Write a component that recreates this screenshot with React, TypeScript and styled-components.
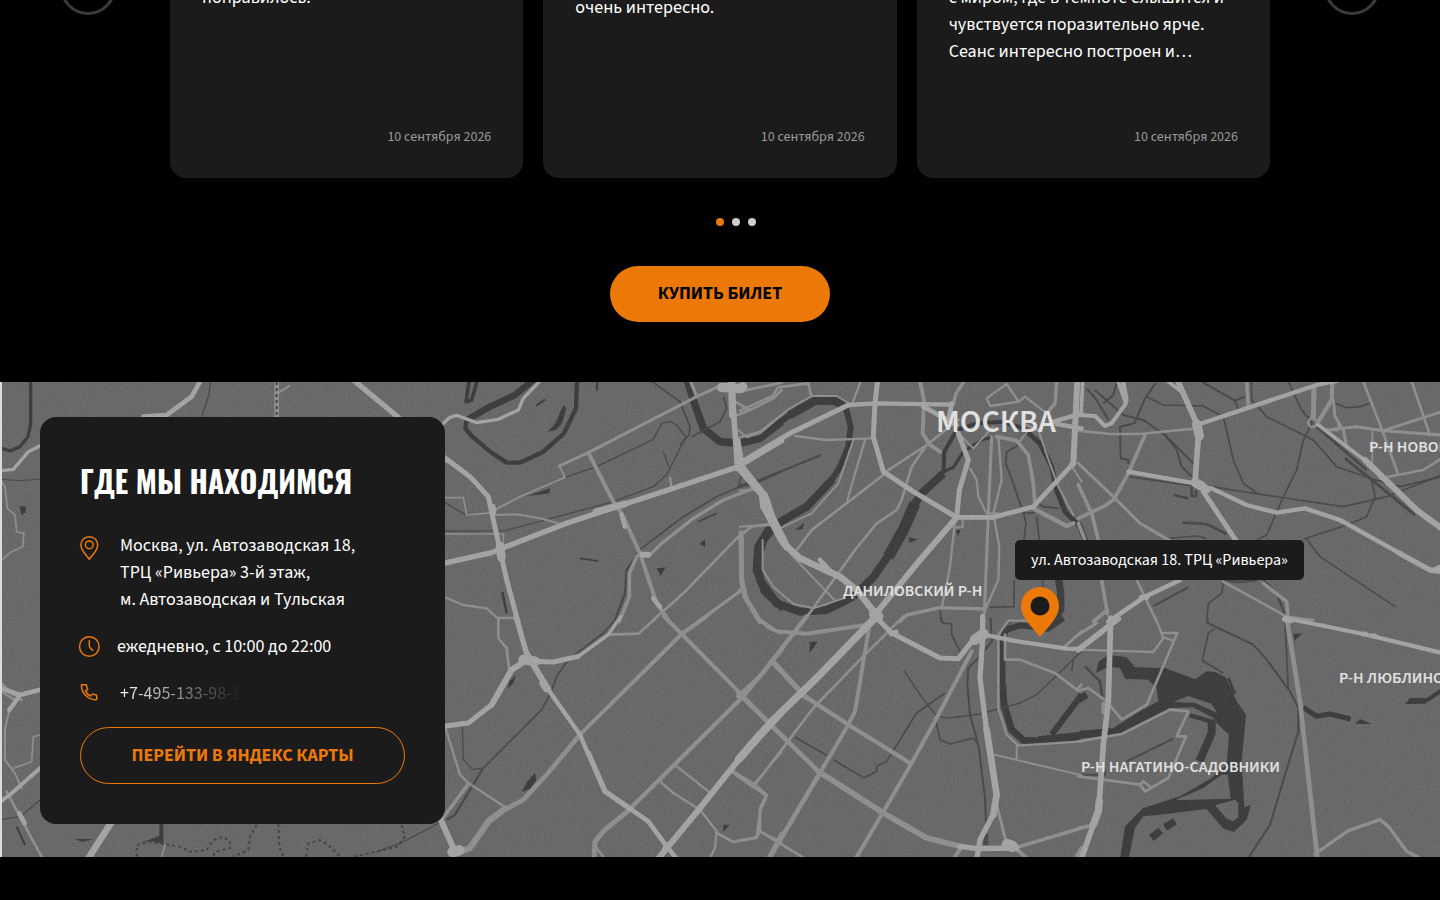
import React from 'react';
import styled, { createGlobalStyle, css } from 'styled-components';

const ORANGE = '#ec7907';
const PANEL = '#1b1b1b';
const SANS = "'Source Sans Pro', 'Source Sans 3', 'Noto Sans CJK SC', 'Noto Sans', sans-serif";
const DISPLAY = "Oswald, 'Roboto Condensed', 'Noto Sans CJK SC', sans-serif";

const GlobalStyle = createGlobalStyle`
  *, *::before, *::after { box-sizing: border-box; }
  html, body { margin: 0; background: #000; }
  body { color: #fff; font-family: ${SANS}; font-size: 18px; line-height: 27px; }
  button { font-family: inherit; cursor: pointer; }
`;

const Page = styled.main`
  display: flow-root;
  min-height: 100vh;
  overflow: hidden;
`;

const Reviews = styled.section`
  display: flex;
  flex-direction: column;
  align-items: center;
  margin-top: -41px;
  padding: 0 60px 60px;
`;

const Slider = styled.div`
  display: flex;
  justify-content: space-between;
  align-items: flex-start;
  gap: 54px;
  width: 100%;
`;

const ArrowButton = styled.button`
  display: grid;
  place-items: center;
  flex: none;
  width: 56px;
  height: 56px;
  padding: 0;
  border: 3px solid #3a3a3a;
  border-radius: 50%;
  background: transparent;
`;

const Cards = styled.div`
  display: grid;
  grid-template-columns: repeat(3, 1fr);
  gap: 20px;
  flex: 1;
  max-width: 1100px;
`;

const ReviewCard = styled.article<{ $lead: number }>`
  display: flex;
  flex-direction: column;
  justify-content: space-between;
  min-height: 219px;
  padding: ${({ $lead }) => $lead}px 32px 31px;
  border-radius: 16px;
  background: ${PANEL};
`;

const ReviewText = styled.p`
  margin: 0;
  white-space: pre-line;
`;

const ReviewDate = styled.time`
  align-self: flex-end;
  color: #9a9a9a;
  font-size: 14px;
  line-height: 20px;
`;

const Dots = styled.div`
  display: flex;
  gap: 8px;
  margin: 40px 0;
  padding-left: 32px;
`;

const Dot = styled.button<{ $active?: boolean }>`
  width: 8px;
  height: 8px;
  padding: 0;
  border: 0;
  border-radius: 50%;
  background: ${({ $active }) => ($active ? ORANGE : '#ccc')};
`;

const pill = css`
  display: flex;
  align-items: center;
  justify-content: center;
  padding: 0 0 1px;
  border-radius: 29px;
  font-size: 18px;
  font-weight: 700;
  text-transform: uppercase;
  text-decoration: none;
`;

const BuyButton = styled.button`
  ${pill}
  width: 220px;
  height: 56px;
  border: 0;
  background: ${ORANGE};
  color: #000;
`;

const MapsLink = styled.a`
  ${pill}
  height: 57px;
  margin-top: 20px;
  border: 1px solid ${ORANGE};
  color: ${ORANGE};
`;

const Location = styled.section`
  position: relative;
  padding: 35px 40px 33px;
  overflow: hidden;
`;

const MapCanvas = styled.svg`
  position: absolute;
  inset: 0;
  width: 100%;
  height: 100%;
  fill: none;
  stroke-linejoin: round;
`;

const MapLabel = styled.span<{ $x: number; $y: number; $large?: boolean }>`
  position: absolute;
  left: calc(50% + ${({ $x }) => $x}px);
  top: ${({ $y }) => $y}px;
  color: #e0e0e0;
  font-size: ${({ $large }) => ($large ? 32 : 16)}px;
  font-weight: 600;
  line-height: ${({ $large }) => ($large ? 40 : 20)}px;
  white-space: nowrap;
`;

const Tooltip = styled.div`
  position: absolute;
  left: calc(50% + 295px);
  top: 158px;
  padding: 10px 16px;
  border-radius: 5px;
  background: ${PANEL};
  font-size: 16px;
  line-height: 20px;
  white-space: nowrap;
`;

const Pin = styled.svg`
  position: absolute;
  left: calc(50% + 301px);
  top: 205px;
  width: 38px;
  height: 50px;
`;

const ContactCard = styled.div`
  position: relative;
  width: 405px;
  max-width: 100%;
  padding: 40px;
  border-radius: 16px;
  background: ${PANEL};
`;

const Heading = styled.h2`
  margin: 0;
  padding: 1px 0 29px;
  font-family: ${DISPLAY};
  font-size: 30px;
  font-weight: 700;
  line-height: 45px;
  text-transform: uppercase;
  white-space: nowrap;
`;

const ContactRow = styled.div<{ $gap?: number }>`
  display: flex;
  gap: ${({ $gap = 20 }) => $gap}px;

  & + & { margin-top: 20px; }
`;

const ContactIcon = styled.svg`
  flex: none;
  width: 20px;
  height: 27px;
  overflow: visible;
  fill: none;
  stroke: ${ORANGE};
  stroke-width: 1.5;
  stroke-linecap: round;
  stroke-linejoin: round;
`;

const ContactText = styled.p`
  margin: 0;
  white-space: pre-line;
`;

const PhoneLink = styled.a`
  width: 122px;
  overflow: hidden;
  background: linear-gradient(to right, #fff, ${PANEL});
  background-clip: text;
  color: transparent;
  text-decoration: none;
  white-space: nowrap;
`;

type Line = [width: number, d: string];

interface Sector {
  x: number;
  y: number;
  /** filled lakes and ponds */
  lakes?: string;
  rivers: Line[];
  rails: Line[];
  streets: Line[];
  avenues: Line[];
  paths?: string;
}

/* Each sector is drawn on a grid three times finer than the map. */
const sectors: Sector[] = [
  {
    x: 0, y: 380,
    lakes: 'M58 380L76 378 78 396 65 405ZM412 1392L478 1368V1332H490V1392L450 1382ZM225 1376L280 1378 245 1386Z',
    rivers: [[10, 'M92 0V130L84 170 60 200 30 213 5 205'], [6, 'M50 1340L75 1395']],
    rails: [[3, 'M5 298L60 302 120 297'], [4, 'M632 5L625 50 605 110'], [4, 'M5 1318L60 1310 120 1260'], [4, 'M1335 1320L1200 1390 1130 1415']],
    streets: [
      [6, 'M835 38L868 18'], [5, 'M5 305L15 320 22 385 45 405 50 455 72 460 68 500 35 515 5 540'],
      [7, 'M5 910L40 945M5 935L45 960M20 925L65 960'],
      [6, 'M30 985L15 1045V1140L45 1180 65 1225'], [5, 'M120 1065L100 1070 95 1145 40 1165'],
      [8, 'M20 1235L60 1310 100 1385 125 1430'], [5, 'M495 1395L485 1430'], [14, 'M830 0V112'],
    ],
    avenues: [
      [10, 'M5 272L40 268 85 215 125 195'], [14, 'M600 5L575 50 500 105 430 110'], [16, 'M1060 0L1190 108 1340 240'],
      [14, 'M5 925L60 945 125 928M60 945L28 990'], [12, 'M5 1262L35 1240 125 1160'], [20, 'M335 1325L262 1440'], [14, 'M58 1300L74 1330'],
    ],
    paths: 'M830 6V112M410 1430V1395L450 1385 540 1400 570 1415 620 1410 640 1380 670 1370 690 1385V1405L645 1415 640 1430M770 1335L750 1370 745 1410 700 1430M835 1332L838 1400 850 1430M918 1430L925 1390 960 1380 985 1395 1020 1430M1205 1335L1215 1370 1190 1400 1130 1415 1060 1430',
  },
  {
    x: 440, y: 380,
    lakes: 'M370 75L379 85 366 130 348 150 323 155 345 132ZM262 348L330 325 328 340ZM650 565L677 562 662 588ZM778 492L795 478 796 500Z',
    rivers: [
      [13, 'M411 0L408 85 372 160 310 215 240 248 200 248 150 215 95 168 76 145 80 115'], [20, 'M78 122L150 80 225 45 280 0'],
      [11, 'M88 0L78 65 95 60 112 0'], [6, 'M315 58L288 78'], [23, 'M742 0L765 75 790 145 840 185 900 190 960 175 1025 125'],
      [24, 'M1025 425L985 450 955 500 950 570 975 635 1030 685'], [5, 'M420 535L475 543'], [7, 'M187 635L200 700'], [4, 'M775 425L830 400'], [6, 'M472 5L470 32'],
    ],
    rails: [
      [4, 'M240 350L375 292 470 260 640 178 665 130 690 125 710 135 738 170 715 215 680 285 640 320 520 365 195 452 15 453'],
      [5, 'M636 5L720 65 750 140 747 165 720 195'], [5, 'M850 50L860 85 840 125 755 170'], [4, 'M670 215L687 262'],
      [5, 'M600 508L730 410 830 350 895 322 940 312 1025 275M905 280L895 322'], [7, 'M525 720L555 640 560 570 595 518'], [4, 'M15 368L82 408'],
    ],
    streets: [
      [9, 'M358 258L445 218 770 50 835 20'], [6, 'M358 258L375 292 240 350 165 390'], [12, 'M445 218L520 365 545 400 600 520 650 670 685 720'],
      [10, 'M595 525L635 520 665 490 760 415 850 360 940 325'], [11, 'M590 530L568 580V650L538 725'],
      [8, 'M640 720L730 640 890 475 935 440 1000 430'], [15, 'M903 458L905 600 915 650 960 725'], [10, 'M775 725L905 630'],
      [5, 'M15 353H70L80 405 160 398'], [6, 'M165 405L230 403 300 415 355 430'], [5, 'M15 462H190V490'], [7, 'M10 650L70 675 140 685 172 714H232'],
      [7, 'M690 292L695 325'], [8, 'M885 65L930 90 1000 55 1025 30M880 110L930 90M910 32L1025 8'], [6, 'M895 150L920 172 960 160 1025 105'], [10, 'M750 0L770 50'],
    ],
    avenues: [
      [10, 'M10 130L30 112 50 106 110 128 175 118 235 90 250 55 298 5'], [15, 'M10 230L90 290 145 350 160 420 180 510 200 600 234 725'],
      [16, 'M10 550L155 518 185 505 380 430 530 380 700 325 890 262 1025 182'], [20, 'M468 395L555 372'], [22, 'M875 10L878 105'],
      [17, 'M880 90L893 262 970 350M893 180L905 255 890 265'], [22, 'M968 350L975 385 1025 480'], [28, 'M845 22L902 26'], [18, 'M158 380L160 395M608 524H625'],
      [26, 'M180 498L184 532'], [14, 'M545 405L555 440M640 655L660 680'],
    ],
  },
  {
    x: 440, y: 618,
    lakes: 'M285 465L289 487 270 512 245 522 262 490ZM850 620L868 620 850 643ZM228 170L220 195 203 213 208 190Z',
    rivers: [],
    rails: [[5, 'M530 0L490 45 385 125 350 175 330 230 305 275 130 450'], [7, 'M130 450L45 590 20 605'], [4, 'M67 325L70 425 98 455 130 450']],
    streets: [
      [8, 'M505 50L595 47 648 0'], [8, 'M175 0V60L200 90 207 150'], [12, 'M800 -5L725 48 420 350'], [14, 'M420 350L320 470 250 545 195 575'],
      [19, 'M195 572L145 610 90 690 50 705'], [12, 'M672 -5L725 48 910 235 1025 352'], [13, 'M570 572L910 235 1025 95'], [15, 'M462 725L465 670 495 635 575 570'], [8, 'M470 690L492 720'],
      [7, 'M15 325L60 470 85 495 200 570'], [11, 'M85 498L5 605'], [7, 'M710 445L805 520'],
      [7, 'M660 490L700 525 780 575 830 640 825 690 808 725'], [8, 'M830 645L880 672 950 658 960 580 980 535 940 505'], [13, 'M875 458L940 505'], [6, 'M940 500L1025 402M960 640L1025 672'],
      [15, 'M985 725L1025 650'], [9, 'M950 -5L985 30 1025 45'], [14, 'M995 130L1025 158'],
    ],
    avenues: [
      [16, 'M228 -5L262 115'], [18, 'M262 110L325 215'], [13, 'M325 215L420 350 445 410'], [16, 'M445 405L495 520 570 572'], [14, 'M570 572L625 610 680 685 712 725'],
      [18, 'M652 725L780 570 900 420 1025 285'], [24, 'M900 420L960 350'], [15, 'M12 325L85 315 155 260 215 155'], [18, 'M155 260L215 155 262 125'], [15, 'M262 130L340 132 415 115'],
      [10, 'M415 115L505 50 542 -5'], [30, 'M250 125L285 130'], [18, 'M0 600L40 690'], [32, 'M38 702L58 697'], [20, 'M308 195L318 212'], [16, 'M674 692L686 680'],
    ],
  },
  {
    x: 740, y: 380,
    lakes: 'M192 428L166 450 188 447ZM505 472L534 478 510 488ZM648 450H662L654 468Z',
    rivers: [
      [19, 'M-5 190L50 175 150 105'], [26, 'M148 106L225 62H285L318 80'], [18, 'M315 75L332 140 325 200 300 260 275 300'],
      [24, 'M278 298L200 380 110 432'], [24, 'M110 432L70 480 52 540 60 600 110 670 180 695 260 690 340 650'], [24, 'M340 650L400 592 460 505'], [34, 'M445 530L490 450 525 370'],
      [24, 'M525 370L545 340 610 280'], [12, 'M610 280L613 215 650 150 710 130 790 125 850 145'], [15, 'M850 145L900 190 935 260 950 330 975 395 1025 445'], [9, 'M610 275L640 262 670 215 730 178 760 172'],
      [22, 'M955 590L962 640V690L930 735'],
    ],
    rails: [
      [6, 'M-5 318L60 300 243 225'], [5, 'M835 195L800 215 797 250 820 310 850 400 858 430 852 480'], [5, 'M885 365L910 380 955 385M890 410L898 480M850 400L885 398'],
      [5, 'M822 600V680L750 682M600 690L605 725M908 600V620'],
    ],
    streets: [
      [8, 'M0 92L98 48 115 22 205 10 213 45'], [6, 'M0 172L60 155 150 85 215 48 290 48 330 72'], [7, 'M362 5L335 75M165 168L260 180 395 175M375 180L322 360'],
      [8, 'M430 285L215 450 170 510M430 280L560 195 655 120'], [8, 'M560 195L515 260 485 360 470 390 410 430 345 510 190 725'],
      [7, 'M0 332L65 328M0 440L95 435'], [12, 'M5 458V600L20 660 62 725M0 630H15'], [6, 'M68 480V570L100 620 160 672 220 685 310 655'], [6, 'M150 520L285 662M340 180L295 310 215 400 125 442'],
      [7, 'M645 425L630 560 605 685'], [9, 'M755 170L745 400 733 700'], [7, 'M775 170L785 300 760 400 778 500 775 600 735 690'], [7, 'M690 265L710 300 715 350 740 400M740 400H775'],
      [10, 'M480 725L500 705 600 683 735 687'], [6, 'M668 415V442H640'], [11, 'M770 170L830 182 865 225 880 310 885 375'], [13, 'M885 388L980 438 1000 430'],
      [10, 'M640 72L648 40 672 5M950 5L945 70 920 100'], [7, 'M740 55L800 12 836 65 750 78ZM836 65L855 50 920 100'], [12, 'M540 5L552 60 548 160 570 195 600 215'],
      [6, 'M860 135L895 150 922 230 955 320 1000 405M990 250L1025 305M835 190L865 150M660 165L700 205 760 140'],
    ],
    avenues: [
      [15, 'M-5 252L150 160 325 75'], [13, 'M325 75L410 70 635 74'], [15, 'M413 0L405 70 400 170 430 275 520 335 650 412'], [14, 'M650 412H760L880 380 1000 250'], [18, 'M1000 250L1012 0'],
      [18, 'M650 412L540 540 400 710'], [15, 'M655 160L685 240 658 330 650 412'], [22, 'M-5 250L75 350 95 410 140 500'], [20, 'M130 490L180 535 300 590 350 630 410 705'],
      [14, 'M550 80L650 135M635 70L628 110'], [24, 'M5 262L10 270M70 345L72 378'], [13, 'M940 125L1025 100M950 132L1025 145'], [36, 'M405 702L412 710'], [14, 'M240 540L270 572'], [28, 'M0 25L8 20'],
    ],
  },
  {
    x: 740, y: 618,
    lakes: 'M210 72L233 70 222 88 208 105Z',
    rivers: [[18, 'M970 0L925 32 840 22 800 35'], [17, 'M800 35L788 60V210'], [21, 'M788 200L792 260 815 335 850 367 900 369'], [25, 'M895 367L1025 354'], [18, 'M935 350L1025 230']],
    rails: [
      [5, 'M600 0L608 15 635 18V50L660 100'], [6, 'M752 0L755 70 720 115 685 150 682 200 690 290 715 380 735 540 740 680'], [4, 'M492 158L540 230 590 295 630 300 720 288 840 255 890 230 1025 100M755 70L820 5M995 160L1000 125'],
      [5, 'M615 225L530 285 440 430 410 445V460L372 480 280 425M260 412L165 358'], [5, 'M588 310L600 365 630 378 700 360 715 380'], [15, 'M738 650V680'],
    ],
    streets: [
      [14, 'M-5 225L240 465'], [17, 'M235 460L430 585 560 660 660 685'], [11, 'M825 690L1025 630'], [9, 'M770 560L800 680'], [13, 'M-5 235L60 175 200 -5'], [12, 'M387 30L345 280 325 320 240 465'], [14, 'M240 465L85 725'],
      [8, 'M490 -5L370 115 220 270 45 500'], [12, 'M695 100L590 300 515 435 425 590 345 725'], [13, 'M195 235L325 320 510 435'], [12, 'M50 0L110 40 200 47 380 20'], [16, 'M97 130L195 235'],
      [8, 'M-5 470L45 500 80 530 60 570V640L50 660 -5 668M60 640L200 725'], [7, 'M870 8H805L775 50V270L800 350 835 383 1025 370'], [6, 'M830 385V425M755 408L1025 472'], [8, 'M795 50V125H840L945 165 1010 215 1025 200'], [9, 'M975 85L1025 40'],
      [12, 'M665 685L640 725M825 690L860 720M1025 690L1005 725'],
    ],
    avenues: [
      [22, 'M-5 425L95 310 230 180 400 5'], [15, 'M405 -5L455 45 600 120 655 122 700 65'], [13, 'M730 50L820 68 980 92 1025 93'], [16, 'M728 -5V60L720 180 740 340'], [20, 'M740 335L770 530 760 590'], [16, 'M762 585L720 665 710 725'],
      [16, 'M660 685L710 692 830 690'], [32, 'M705 65L730 48'], [16, 'M454 47L468 43'], [34, 'M802 680L817 685'], [22, 'M376 28L404 2'],
    ],
  },
  {
    x: 1080, y: 380,
    rivers: [[16, 'M-5 430L18 485']],
    rails: [
      [6, 'M228 8L195 55 163 130 120 140 122 235 145 240V252'], [6, 'M20 25L50 60 85 120M45 30L130 105 190 120 255 165 340 250M110 10L100 45 70 70'], [6, 'M255 165L290 210 305 260 335 290'],
      [5, 'M200 50L250 75 370 78 430 110 460 240 490 310 535 342'], [6, 'M365 5L465 62 495 50M465 62L475 88'], [5, 'M515 0V60L560 110 700 180 770 260 870 295 960 320 1085 290'],
      [5, 'M625 5L665 90 697 128 670 180 650 270 610 350 560 465 530 480'], [5, 'M395 320L535 342 790 380 920 350 1085 285'], [5, 'M875 300L885 350 860 410 800 435 670 478M680 478L720 530 945 680'],
      [8, 'M308 428L380 432 440 462M280 345L325 355M335 320V348H348V330'], [5, 'M265 475L350 468 380 475M145 290L340 318'], [5, 'M765 70L800 83 840 80 870 70'], [9, 'M795 235L870 295 1005 405'], [8, 'M710 140L860 270'],
      [6, 'M220 678L325 622M205 640L290 600'], [5, 'M430 610L425 640 385 670 380 725'], [7, 'M550 600L590 640 615 705M430 600L480 606 530 600'],
    ],
    streets: [
      [8, 'M-5 152L90 162H180L350 145'], [11, 'M195 165L145 280 100 360 70 380 -5 415'], [9, 'M-5 250L100 350 180 430 270 482'], [11, 'M-5 315L35 400 60 500 65 600 82 700'], [11, 'M500 5L505 78'], [15, 'M702 25L700 110'],
      [13, 'M757 5L755 60 715 125'], [9, 'M760 60L765 110 790 150 800 200'], [9, 'M740 150L830 140 910 152 1085 165'], [8, 'M850 5L910 160 955 285M995 5L1050 165'], [9, 'M910 152L1085 95'], [6, 'M877 155V270'], [8, 'M900 295L1030 270 1085 235'],
      [8, 'M170 600L230 725M430 605L620 710 700 720'], [11, 'M550 610L620 665 625 725'], [11, 'M40 725L82 690M-5 430L15 480'], [7, 'M697 115a13 13 0 1 0 1 0M740 150H775V130'],
    ],
    avenues: [
      [17, 'M292 0L350 130 355 170 345 310'], [15, 'M370 335L470 485'], [13, 'M350 135L710 15 770 3'], [11, 'M714 134L860 245'], [18, 'M855 240L1010 390 1085 445'], [14, 'M85 725L195 650 300 600'],
      [13, 'M395 325L500 375 590 398 675 385 780 420 960 520'], [16, 'M955 518L1050 570 1085 575'], [13, 'M145 275L345 310'], [12, 'M-5 105L45 108 75 138 95 130 138 70 115 5M130 5L140 60'], [28, 'M350 132L358 168M346 308L365 318'], [22, 'M365 318L382 328'], [11, 'M265 5L310 40M8 5L3 105'], [16, 'M1060 571L1085 560M184 652H200'],
    ],
  },
  {
    x: 1080, y: 618,
    lakes: 'M48 165L55 132 85 110 140 118 165 148 255 150 345 184 380 160 405 162 437 178 470 250 498 290 485 430 493 568 512 560 500 605 462 642 430 632 380 573 240 590 190 595 165 630 145 725 120 725 135 625 190 570 300 535 395 480 440 440 447 350 410 315 400 300 340 268 270 270 200 305 120 350 0 362V338L100 330 180 280 235 250 230 210 205 185 135 182 120 150 85 146ZM285 547L370 510 425 470 443 470 452 542ZM405 562L465 545 475 555V598L460 610 440 602ZM280 252L325 234 395 258 412 285 345 255ZM975 258L990 240 1040 240 1085 210V225L1035 257ZM825 317L840 303 875 318ZM640 48L667 46 643 68Z',
    rivers: [[24, 'M395 305V345L358 430'], [13, 'M330 292L400 312'], [22, 'M-5 245L20 230'], [15, 'M670 268L710 295 750 288 812 303'], [22, 'M214 660L242 638M255 628L285 610'], [8, 'M445 180L465 228']],
    rails: [[6, 'M383 0V15L520 80 560 125 630 220 655 270V340L600 520 570 620 505 720'], [5, 'M405 32L385 45 367 128 430 165M615 10L625 215'], [8, 'M15 145L60 190 68 245'], [6, 'M140 430L280 362M0 470H75V455']],
    streets: [
      [9, 'M-5 50L50 15'], [7, 'M-5 95L220 102 250 60 225 -5'], [8, 'M250 45H292L200 260 125 305 80 250 25 210 -5 218'], [7, 'M250 58L280 68'],
      [8, 'M-5 370L125 348 270 275 325 280 290 355H318L265 480 195 520 180 500 -5 475M180 500L190 490 215 510'], [14, 'M71 258V282'], [11, 'M-5 630L40 622'], [10, 'M705 708L805 638 900 605 925 625 980 700 1015 718'],
      [14, 'M620 0L660 250 712 720'],
    ],
    avenues: [[17, 'M92 0L85 250 70 380 57 560'], [22, 'M58 550L55 580 40 620'], [17, 'M40 620L3 725'], [17, 'M-5 95L115 2'], [13, 'M615 0L850 48 1085 105'], [15, 'M849 48H855M879 54H885'], [16, 'M614 4L633 8']],
  },
];

const layers = [
  { key: 'rivers', stroke: '#2a2a2a', cap: 'butt' },
  { key: 'rails', stroke: '#383838', cap: 'butt' },
  { key: 'streets', stroke: '#888', cap: 'round' },
  { key: 'avenues', stroke: '#a0a0a0', cap: 'round' },
] as const;

const CityMap = () => (
  <MapCanvas viewBox="0 382 1440 475" preserveAspectRatio="xMidYMid slice" aria-hidden="true">
    <defs>
      <filter id="grain" x="0" y="0" width="100%" height="100%">
        <feTurbulence type="fractalNoise" baseFrequency="0.7" numOctaves="2" seed="4" />
        <feColorMatrix values="1 0 0 0 0  1 0 0 0 0  1 0 0 0 0  0 0 0 0 1" />
      </filter>
    </defs>
    <rect y="382" width="1440" height="475" fill="#5c5c5c" />
    {sectors.map((s) => (
      <g key={`lakes-${s.x}-${s.y}`} transform={`translate(${s.x} ${s.y}) scale(${1 / 3})`}>
        <path d={s.lakes} fill="#2a2a2a" fillRule="evenodd" />
      </g>
    ))}
    {layers.map(({ key, stroke, cap }) =>
      sectors.map((s) => (
        <g key={`${key}-${s.x}-${s.y}`} transform={`translate(${s.x} ${s.y}) scale(${1 / 3})`} stroke={stroke} strokeLinecap={cap}>
          {s[key].map(([width, d]) => (
            <path key={d} d={d} strokeWidth={width} />
          ))}
          {key === 'avenues' && s.paths && (
            <path d={s.paths} stroke="#333" strokeWidth="6" strokeDasharray="9 9" strokeLinecap="butt" />
          )}
        </g>
      )),
    )}
    <rect y="382" width="1440" height="475" filter="url(#grain)" opacity="0.14" />
    <rect y="382" width="2" height="475" fill="#dcdcdc" />
  </MapCanvas>
);

const reviews = [
  { text: 'понравилось.', lead: 25 },
  { text: 'очень интересно.', lead: 35 },
  { text: 'с миром, где в темноте слышится и\nчувствуется поразительно ярче.\nСеанс интересно построен и…', lead: 25 },
];

const labels = [
  { text: 'МОСКВА', x: 216, y: 20, large: true },
  { text: 'Р-Н НОВОГИРЕЕВО', x: 649, y: 55 },
  { text: 'ДАНИЛОВСКИЙ Р-Н', x: 123, y: 199 },
  { text: 'Р-Н ЛЮБЛИНО', x: 619, y: 286 },
  { text: 'Р-Н НАГАТИНО-САДОВНИКИ', x: 361, y: 375 },
];

const App = () => (
  <Page>
    <GlobalStyle />
    <Reviews>
      <Slider>
        <ArrowButton type="button" aria-label="Назад" />
        <Cards>
          {reviews.map(({ text, lead }) => (
            <ReviewCard key={text} $lead={lead}>
              <ReviewText>{text}</ReviewText>
              <ReviewDate dateTime="2026-09-10">10 сентября 2026</ReviewDate>
            </ReviewCard>
          ))}
        </Cards>
        <ArrowButton type="button" aria-label="Вперёд" />
      </Slider>
      <Dots>
        <Dot type="button" $active aria-label="Страница 1" />
        <Dot type="button" aria-label="Страница 2" />
        <Dot type="button" aria-label="Страница 3" />
      </Dots>
      <BuyButton type="button">Купить билет</BuyButton>
    </Reviews>

    <Location>
      <CityMap />
      {labels.map(({ text, x, y, large }) => (
        <MapLabel key={text} $x={x} $y={y} $large={large}>{text}</MapLabel>
      ))}
      <Tooltip>ул. Автозаводская 18. ТРЦ «Ривьера»</Tooltip>
      <Pin viewBox="0 0 38 50" aria-hidden="true">
        <path d="M19 0C8.500 0 0 8.300 0 18.800c0 6.200 3 11.700 7.500 17.500C11 41 15.500 46 19 50c3.500-4 8-9 11.500-13.700C35 30.500 38 25 38 18.800 38 8.300 29.500 0 19 0Z" fill={ORANGE} />
        <circle cx="19" cy="19" r="9.500" fill={PANEL} />
      </Pin>
      <ContactCard>
        <Heading>Где мы находимся</Heading>
        <ContactRow>
          <ContactIcon viewBox="0 0 20 27" aria-hidden="true">
            <path d="M9.300 27.200C6 22.500.9 18.500.9 12.900.9 8.200 4.600 4.700 9.300 4.700s8.400 3.500 8.400 8.200c0 5.600-5.100 9.600-8.400 14.300Z" />
            <circle cx="9.300" cy="12.800" r="3.900" />
          </ContactIcon>
          <ContactText>{'Москва, ул. Автозаводская 18,\nТРЦ «Ривьера» 3-й этаж,\nм. Автозаводская и Тульская'}</ContactText>
        </ContactRow>
        <ContactRow $gap={17}>
          <ContactIcon viewBox="0 0 20 27" aria-hidden="true">
            <circle cx="9.300" cy="13.500" r="9.800" />
            <path d="M9.300 7.800v5.200c0 1.700 2 3 3.500 4.300" />
          </ContactIcon>
          <ContactText>ежедневно, с 10:00 до 22:00</ContactText>
        </ContactRow>
        <ContactRow>
          <ContactIcon viewBox="0 0 20 27" aria-hidden="true">
            <path d="M1.500 4.700h4.700l1.500 4.700-2.200 1.500c1 2.500 3 4.300 5.200 5.200l1.700-2.200 4.300 1.400v4.300c-8.200.8-15.800-6.600-15.200-14.900Z" />
          </ContactIcon>
          <PhoneLink href="tel:+74951339811">+7-495-133-98-11</PhoneLink>
        </ContactRow>
        <MapsLink href="#maps">Перейти в яндекс карты</MapsLink>
      </ContactCard>
    </Location>
  </Page>
);

export default App;
